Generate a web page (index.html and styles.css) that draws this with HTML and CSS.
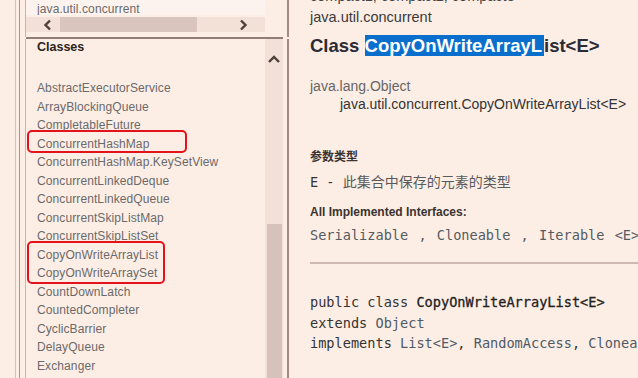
FILE: index.html
```html
<!DOCTYPE html>
<html lang="zh">
<head>
    <meta charset="UTF-8">
    <meta name="viewport" content="width=device-width, initial-scale=1.0">
    <title>CopyOnWriteArrayList</title>
    <link rel="stylesheet" href="styles.css">
</head>
<body>
    <div class="page">
        <aside class="nav">
            <div class="nav-rule">
                <div class="nav-frame">
                    <div class="pkg-pane">
                        <div class="pkg-col">
                            <div class="pkg-view">java.util.concurrent</div>
                            <div class="hscroll">
                                <svg class="arrow" width="12" height="12" viewBox="0 0 12 12"><polyline points="8,1.5 3.5,6 8,10.5" fill="none" stroke="#4d3f39" stroke-width="2.4"/></svg>
                                <div class="hthumb"></div>
                                <svg class="arrow right" width="12" height="12" viewBox="0 0 12 12"><polyline points="4,1.5 8.5,6 4,10.5" fill="none" stroke="#4d3f39" stroke-width="2.4"/></svg>
                            </div>
                        </div>
                    </div>
                    <div class="class-pane">
                        <div class="class-col">
                            <div class="class-head">Classes</div>
                            <ul class="class-list">
                                <li>AbstractExecutorService</li>
                                <li>ArrayBlockingQueue</li>
                                <li>CompletableFuture</li>
                                <li>ConcurrentHashMap</li>
                                <li>ConcurrentHashMap.KeySetView</li>
                                <li>ConcurrentLinkedDeque</li>
                                <li>ConcurrentLinkedQueue</li>
                                <li>ConcurrentSkipListMap</li>
                                <li>ConcurrentSkipListSet</li>
                                <li>CopyOnWriteArrayList</li>
                                <li>CopyOnWriteArraySet</li>
                                <li>CountDownLatch</li>
                                <li>CountedCompleter</li>
                                <li>CyclicBarrier</li>
                                <li>DelayQueue</li>
                                <li>Exchanger</li>
                            </ul>
                            <div class="mark mark-one"></div>
                            <div class="mark mark-two"></div>
                        </div>
                        <div class="vscroll">
                            <svg class="up" width="14" height="10" viewBox="0 0 14 10"><polyline points="2,8 7,3 12,8" fill="none" stroke="#4d3f39" stroke-width="2.4"/></svg>
                            <div class="vthumb"></div>
                        </div>
                    </div>
                </div>
            </div>
        </aside>

        <main class="content">
            <div class="profile">compact1, compact2, compact3</div>
            <div class="pkg">java.util.concurrent</div>
            <h2 class="title">Class <span class="sel">CopyOnWriteArrayL</span>ist&lt;E&gt;</h2>
            <div class="inherit">
                <div>java.lang.Object</div>
                <div class="inherit-sub">java.util.concurrent.CopyOnWriteArrayList&lt;E&gt;</div>
            </div>
            <div class="dt dt-params">参数类型</div>
            <div class="dd"><span class="mono">E - </span>此集合中保存的元素的类型</div>
            <div class="dt dt-ifaces">All Implemented Interfaces:</div>
            <div class="dd mono ifaces">Serializable , Cloneable , Iterable &lt;E&gt;, Collection&lt;E&gt;</div>
            <hr class="rule">
            <pre class="sig">public class <b>CopyOnWriteArrayList&lt;E&gt;</b>
extends <span class="ref">Object</span>
implements <span class="ref">List&lt;E&gt;</span>, <span class="ref">RandomAccess</span>, <span class="ref">Cloneable</span>, <span class="ref">Serializable</span></pre>
            <p class="desc">ArrayList 的线程安全变体，其中所有可变操作都是通过创建底层数组的新副本来实现的。</p>
        </main>
    </div>
</body>
</html>
```

FILE: styles.css
```css
html, body {
    margin: 0;
    padding: 0;
    background-color: #fdeee5;
    font-family: "Liberation Sans", Arial, "Noto Sans CJK SC", sans-serif;
    overflow: hidden;
}

.page {
    display: flex;
    width: 638px;
    height: 378px;
    overflow: hidden;
}

/* left navigation frames */
.nav {
    width: 290px;
    flex-shrink: 0;
    height: 378px;
}

.nav-rule {
    margin-left: 15px;
    height: 100%;
    border-left: 1px solid #d6c0b7;
    padding-left: 3px;
}

.nav-frame {
    height: 100%;
    border-left: 1px solid #a8948c;
    padding-left: 5px;
    display: flex;
    flex-direction: column;
}

.pkg-pane,
.class-pane {
    border-left: 1px solid #c9b3aa;
    border-right: 2px solid #a08a83;
    width: 261px;
}

.pkg-pane {
    height: 37px;
    flex-shrink: 0;
    position: relative;
}

.pkg-pane::after {
    content: "";
    display: block;
    width: 257px;
    height: 2px;
    background-color: #8f7d76;
    position: absolute;
    left: 0;
    bottom: -2px;
}

.pkg-col {
    width: 239px;
}

.pkg-view {
    height: 15px;
    background-color: #fdf3ee;
    font-size: 12px;
    line-height: 18px;
    color: #6a6a6a;
    padding-left: 11px;
    letter-spacing: 0.1px;
    overflow: hidden;
}

.hscroll {
    margin-top: 2px;
    height: 15px;
    background-color: #f3e0d7;
    display: flex;
    align-items: center;
    padding: 0 16px;
}

.hthumb {
    margin-left: 6px;
    width: 137px;
    height: 15px;
    background-color: #d9c5bd;
}

.arrow.right {
    margin-left: auto;
}

.class-pane {
    flex: 1;
    margin-top: 2px;
    display: flex;
    overflow: hidden;
}

.class-col {
    width: 239px;
    position: relative;
}

.class-head {
    font-weight: bold;
    font-size: 12.5px;
    line-height: 16px;
    color: #2a2420;
    padding-left: 11px;
}

.class-list {
    list-style: none;
    margin: 24px 0 0 0;
    padding: 0 0 0 11px;
}

.class-list li {
    font-size: 12px;
    line-height: 18.5px;
    color: #6a6a6a;
    letter-spacing: 0.1px;
    white-space: nowrap;
}

/* red annotation boxes drawn over the list */
.mark {
    position: absolute;
    left: 1px;
    border: 2px solid #e3131c;
    border-radius: 5px;
}

.mark-one {
    top: 91px;
    width: 156px;
    height: 19px;
}

.mark-two {
    top: 202px;
    width: 134px;
    height: 39px;
}

.vscroll {
    width: 18px;
    background-color: #f3e0d7;
    display: flex;
    flex-direction: column;
    align-items: center;
}

.up {
    margin-top: 15px;
}

.vthumb {
    margin-top: 160px;
    width: 15px;
    flex: 1;
    background-color: #d6c2ba;
}

/* right content frame */
.content {
    flex: 1;
    padding-left: 20px;
    color: #333;
    white-space: nowrap;
    overflow: hidden;
}

.profile {
    margin-top: -13px;
    font-size: 14.5px;
    line-height: 18px;
    color: #444;
}

.pkg {
    margin-top: 2px;
    font-size: 14.5px;
    line-height: 20px;
    color: #3a3a3a;
}

.title {
    margin: 8px 0 0 0;
    font-size: 18.5px;
    line-height: 22px;
    font-weight: bold;
    color: #2b2b35;
}

.sel {
    background-color: #0a6fcc;
    color: #fff;
    padding-right: 2px;
}

.inherit {
    margin-top: 20px;
    font-size: 14px;
    line-height: 18px;
    color: #333;
}

.inherit > div:first-child {
    color: #666;
}

.inherit-sub {
    padding-left: 30px;
}

.dt {
    font-size: 12px;
    line-height: 16px;
    font-weight: bold;
    color: #3a3330;
}

.dt-params {
    margin-top: 36px;
}

.dt-ifaces {
    margin-top: 12px;
}

.dd {
    margin-top: 7px;
    font-size: 14px;
    line-height: 20px;
    color: #5a5a5a;
}

.mono,
.sig {
    font-family: "DejaVu Sans Mono", "Liberation Mono", monospace;
    font-size: 13.6px;
}

.dd .mono {
    color: #333;
}

.ifaces {
    margin-top: 5px;
    color: #555b62;
    word-spacing: 2px;
}

.rule {
    margin: 17px 0 0 0;
    border: none;
    height: 2px;
    background-color: #cdb9af;
}

.sig {
    margin: 28px 0 0 0;
    line-height: 20.5px;
    color: #333;
}

.sig b {
    font-weight: normal;
    color: #222;
    -webkit-text-stroke: 0.3px #222;
}

.ref {
    color: #4f5a66;
}

.desc {
    margin: 22px 0 0 0;
    font-size: 14px;
    line-height: 20px;
    color: #bbb;
}
```
